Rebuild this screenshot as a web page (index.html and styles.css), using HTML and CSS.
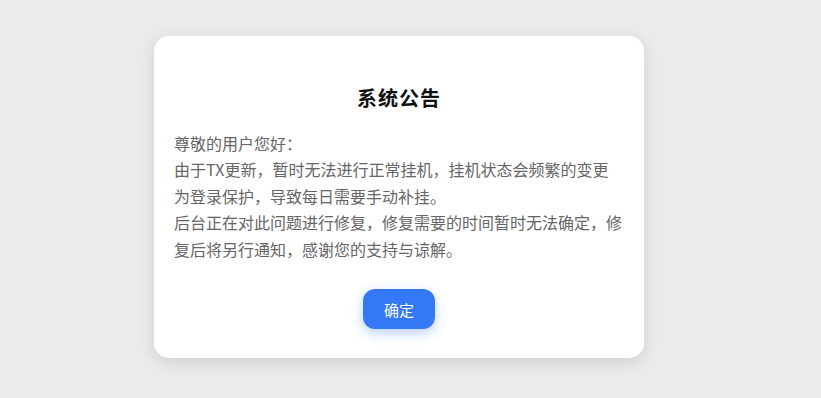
FILE: index.html
```html
<!DOCTYPE html>
<html lang="zh-CN">
<head>
    <meta charset="UTF-8">
    <meta name="viewport" content="width=device-width, initial-scale=1.0">
    <title>系统公告</title>
    <link rel="stylesheet" href="styles.css">
</head>
<body>
    <div class="notice">
        <h2 class="notice-title">系统公告</h2>
        <div class="notice-body">
            <p>尊敬的用户您好：</p>
            <p>由于TX更新，暂时无法进行正常挂机，挂机状态会频繁的变更为登录保护，导致每日需要手动补挂。</p>
            <p>后台正在对此问题进行修复，修复需要的时间暂时无法确定，修复后将另行通知，感谢您的支持与谅解。</p>
        </div>
        <div class="notice-actions">
            <button class="confirm">确定</button>
        </div>
    </div>
</body>
</html>
```

FILE: styles.css
```css
body {
    margin: 0;
    padding: 0 23px 4px 0;
    box-sizing: border-box;
    height: 100vh;
    display: flex;
    justify-content: center;
    align-items: center;
    background: #ebebeb;
    font-family: "Noto Sans CJK SC", "Noto Sans", sans-serif;
}
.notice {
    width: 450px;
    padding: 20px 20px 29px;
    background: #fff;
    border-radius: 15px;
    box-shadow: 0 4px 16px rgba(0, 0, 0, 0.12);
}
.notice-title {
    margin: 30px 0 20px;
    text-align: center;
    font-size: 20px;
    line-height: 24px;
    font-weight: bold;
    letter-spacing: 1px;
    color: #111;
}
.notice-body {
    font-size: 16px;
    line-height: 26.5px;
    color: #666;
}
.notice-body p {
    margin: 0;
}
.notice-actions {
    margin-top: 27px;
    display: flex;
    justify-content: center;
}
.confirm {
    width: 72px;
    height: 40px;
    border: none;
    border-radius: 12px;
    background: #3478f6;
    color: #fff;
    font-family: inherit;
    font-size: 15px;
    cursor: pointer;
    box-shadow: 0 4px 12px rgba(52, 120, 246, 0.35);
}
```
